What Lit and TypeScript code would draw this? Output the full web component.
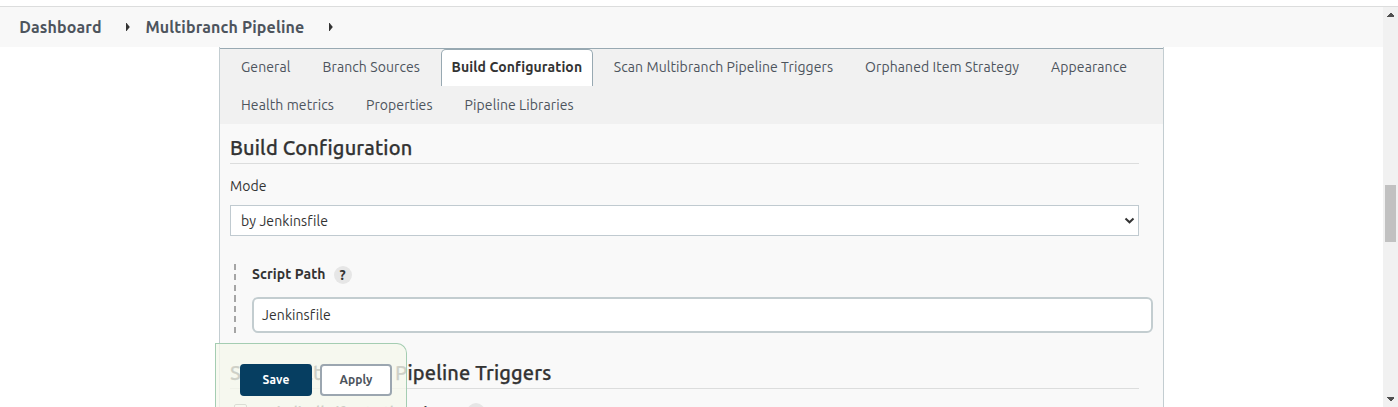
import { LitElement, html, css } from "lit";
import { customElement } from "lit/decorators.js";

const tabs: string[][] = [
  [
    "General",
    "Branch Sources",
    "Build Configuration",
    "Scan Multibranch Pipeline Triggers",
    "Orphaned Item Strategy",
    "Appearance",
  ],
  ["Health metrics", "Properties", "Pipeline Libraries"],
];

@customElement("app-root")
class AppRoot extends LitElement {
  static styles = css`
    :host {
      display: block; position: relative; width: 1398px; height: 407px; overflow: hidden;
      background: #fff; color: #333; box-sizing: border-box; padding-top: 6px;
      font: 14px/20px Ubuntu, "Noto Sans", sans-serif; letter-spacing: 0.09px;
    }
    * { box-sizing: border-box; }
    span { white-space: nowrap; }
    .window { border-top: 1px solid #dcdddd; height: 401px; display: flex; }
    .page { flex: 1; height: 400px; overflow: hidden; }
    .crumbs {
      height: 40px; background: #f8f8f8; display: flex; align-items: center;
      padding-left: 19.2px; font-size: 16px; font-weight: 700; color: #4d545d; letter-spacing: 0.14px;
    }
    .crumbs svg { flex: none; margin: 0 15.5px 0 23.3px; }
    .panel {
      width: 945px; height: 370px; margin-left: 219px; background: #f9f9f9;
      border: solid #c3cdd1; border-width: 0 1px; padding-top: 1px;
    }
    .tabs { height: 76px; background: #f1f1f1; border-top: 1px solid #98a9b2; padding-left: 10px; }
    .row { display: flex; gap: 10px; height: 38px; }
    .tab {
      height: 37px; padding: 7px 10px 0; border: 1px solid transparent; border-width: 0 1px;
      color: #4d545d; line-height: 22px;
    }
    .tab.active {
      background: #fff; color: #333; font-weight: 700; border-color: #98a9b2;
      border-top: 1px solid #98a9b2; border-radius: 5px 5px 0 0; padding: 6px 9.6px 0;
    }
    .body { padding-left: 10px; }
    .title {
      width: 909px; height: 40px; border-bottom: 1px solid #dcdddd; padding-top: 11px;
      font-size: 20px; line-height: 26px; font-weight: 500; letter-spacing: 0.16px;
      -webkit-text-stroke: 0.25px #333;
    }
    .mode { height: 41px; padding-top: 12px; }
    .select {
      width: 909px; height: 31px; border: 1px solid #c0cad0; background: #fff;
      display: flex; align-items: center; justify-content: space-between; padding: 0 3px 0 10px;
    }
    .nested { display: flex; margin: 28px 0 0 4px; height: 69px; }
    .dash {
      width: 2px; height: 69px; margin-right: 16px;
      background: repeating-linear-gradient(#a5a5a5 0 6px, transparent 6px 10.5px);
    }
    .label { display: flex; height: 33px; font-weight: 700; }
    .help {
      width: 18px; height: 18px; margin: 2px 0 0 8px; border-radius: 50%; background: #e6e6e6;
      text-align: center; font-size: 14px; line-height: 18px; font-weight: 700;
    }
    .input {
      width: 901px; height: 36px; border: 2px solid #c3cdd0; border-radius: 6px; background: #fff;
      padding: 6px 8px 0;
    }
    .second { margin-top: 16px; }
    .check { display: flex; padding: 14px 0 0 4px; font-weight: 700; }
    .box { width: 13px; height: 13px; margin: 1px 7px 0 0; border: 1px solid #767676; border-radius: 2px; background: #fff; }
    .check .label-text { width: 204px; margin-top: -1px; }
    .check .help { margin: 0 0 0 9px; }
    .actions {
      position: absolute; left: 215px; top: 343px; width: 192px; height: 70px;
      background: rgba(245, 248, 236, 0.8); border: 1px solid #a4cdb2; border-bottom: 0;
      border-top-right-radius: 10px; padding: 20px 0 0 24px; display: flex; gap: 8px;
      font-size: 12px; font-weight: 700;
    }
    .btn {
      width: 72px; height: 32px; border-radius: 4px; border: 2px solid #063e61; background: #063e61;
      color: #fff; display: flex; align-items: center; justify-content: center;
    }
    .btn.light { background: #fff; border-color: #9ba6b0; color: #4d545d; }
    .scroll {
      width: 15px; height: 400px; background: #f1f1f1; display: flex; flex-direction: column;
      align-items: center;
    }
    .scroll svg { display: block; flex: none; }
    .thumb { width: 11px; height: 57px; margin: 163px 0 150px; background: #c1c1c1; flex: none; }
  `;
  private caret() {
    return html`<svg width="5" height="8" viewBox="0 0 5 8"><path d="M1 0H1.6L4.8 4L1.6 8H1Z" fill="#333" /></svg>`;
  }
  render() {
    return html`
      <div class="window">
        <div class="page">
          <div class="crumbs">
            <span>Dashboard</span>${this.caret()}<span>Multibranch Pipeline</span>${this.caret()}
          </div>
          <div class="panel">
            <div class="tabs">
              ${tabs.map(
                (row) => html`<div class="row">
                  ${row.map(
                    (name) => html`<div class="tab ${name === "Build Configuration" ? "active" : ""}"><span>${name}</span></div>`
                  )}
                </div>`
              )}
            </div>
            <div class="body">
              <div class="title">Build Configuration</div>
              <div class="mode">Mode</div>
              <div class="select">
                <span>by Jenkinsfile</span>
                <svg width="11" height="8" viewBox="0 0 11 8">
                  <path d="M1.5 1.5L5.5 5.3L9.5 1.5" fill="none" stroke="#333" stroke-width="2" />
                </svg>
              </div>
              <div class="nested">
                <div class="dash"></div>
                <div>
                  <div class="label"><span>Script Path</span><span class="help">?</span></div>
                  <div class="input">Jenkinsfile</div>
                </div>
              </div>
              <div class="title second">Scan Multibranch Pipeline Triggers</div>
              <div class="check">
                <span class="box"></span><span class="label-text">Periodically if not otherwise run</span><span class="help">?</span>
              </div>
            </div>
          </div>
        </div>
        <div class="scroll">
          <svg width="15" height="15" viewBox="0 0 15 15" shape-rendering="crispEdges"><path d="M4 10V9L7 6H8L11 9V10Z" fill="#505050" /></svg>
          <div class="thumb"></div>
          <svg width="15" height="15" viewBox="0 0 15 15" shape-rendering="crispEdges"><path d="M4 5V6L7 9H8L11 6V5Z" fill="#505050" /></svg>
        </div>
      </div>
      <div class="actions">
        <div class="btn">Save</div>
        <div class="btn light">Apply</div>
      </div>
    `;
  }
}
